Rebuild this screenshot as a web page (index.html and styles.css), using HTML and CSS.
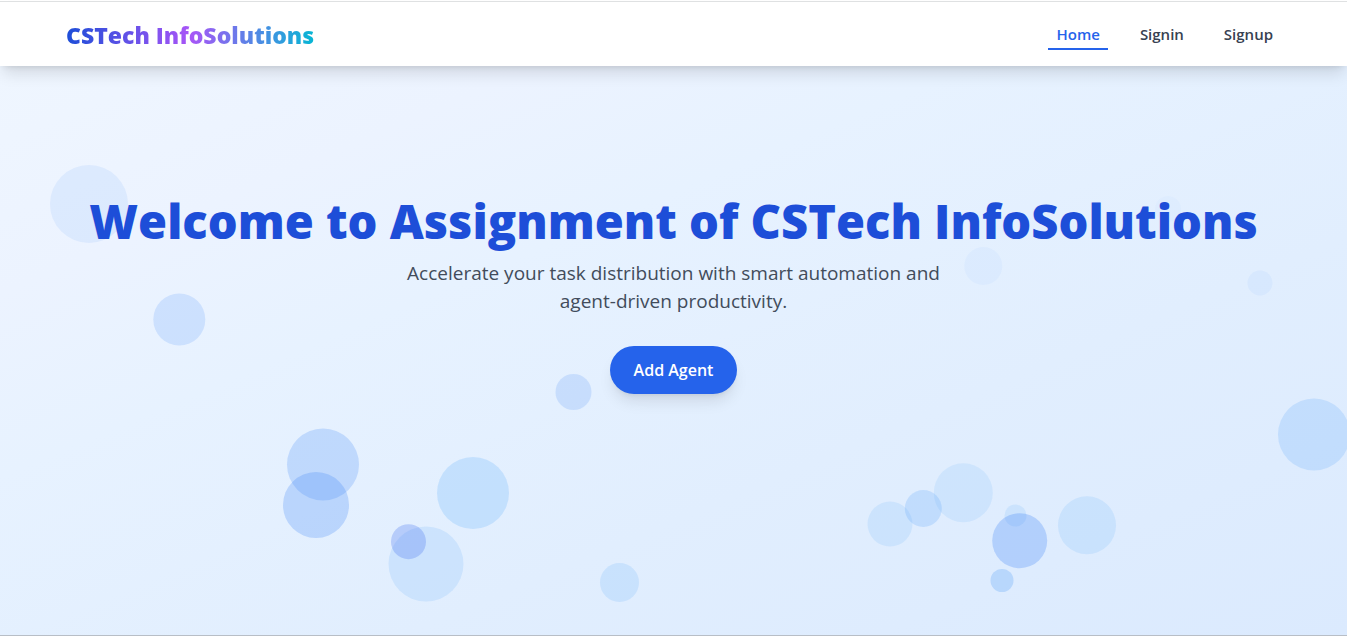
FILE: index.html
```html
<!DOCTYPE html>
<html lang="en">
<head>
<meta charset="utf-8">
<meta name="viewport" content="width=device-width, initial-scale=1">
<title>CSTech InfoSolutions</title>
<link rel="stylesheet" href="styles.css">
</head>
<body>
<header class="navbar">
  <a class="brand" href="#">CSTech InfoSolutions</a>
  <nav class="nav-links">
    <a class="nav-link active" href="#">Home</a>
    <a class="nav-link" href="#">Signin</a>
    <a class="nav-link" href="#">Signup</a>
  </nav>
</header>
<main class="hero">
  <svg class="bubbles" aria-hidden="true">
    <g fill="#60a5fa">
      <circle cx="89" cy="138" r="39" fill="#3b82f6" opacity=".09"/>
      <circle cx="179.300" cy="253.500" r="26" fill="#3b82f6" opacity=".16"/>
      <circle cx="573.500" cy="326" r="18" fill="#3b82f6" opacity=".17"/>
      <circle cx="323" cy="398.500" r="36" fill="#3b82f6" opacity=".22"/>
      <circle cx="316" cy="439" r="33" fill="#3b82f6" opacity=".25"/>
      <circle cx="473" cy="427" r="36" opacity=".24" fill="#60aefa"/>
      <circle cx="426" cy="498" r="37.500" opacity=".17" fill="#60aefa"/>
      <circle cx="408.500" cy="475.700" r="17.500" fill="#4f7cf3" opacity=".3"/>
      <circle cx="619.500" cy="516.500" r="19.500" opacity=".18" fill="#60aefa"/>
      <circle cx="890" cy="458" r="22.500" opacity=".15" fill="#60aefa"/>
      <circle cx="963.300" cy="426.700" r="29.500" opacity=".14" fill="#60aefa"/>
      <circle cx="923.300" cy="442.500" r="18.500" opacity=".24" fill="#60a8fa"/>
      <circle cx="1015.500" cy="449.500" r="11" opacity=".15" fill="#60aefa"/>
      <circle cx="1019.700" cy="474.700" r="27.500" fill="#3b82f6" opacity=".27"/>
      <circle cx="1002" cy="514.500" r="11.500" opacity=".3"/>
      <circle cx="1087" cy="459.300" r="29" opacity=".16" fill="#60aefa"/>
      <circle cx="1314" cy="368.500" r="36" opacity=".22" fill="#60aafa"/>
      <circle cx="983.300" cy="200" r="19" opacity=".06"/>
      <circle cx="1168" cy="143" r="13" opacity=".03"/>
      <circle cx="1260" cy="217" r="12.500" opacity=".08"/>
    </g>
  </svg>
  <div class="hero-content">
    <h1 class="hero-title">Welcome to Assignment of CSTech InfoSolutions</h1>
    <p class="hero-text">Accelerate your task distribution with smart automation and agent-driven productivity.</p>
    <button class="cta" type="button">Add Agent</button>
  </div>
</main>
</body>
</html>
```
FILE: styles.css
```css
* {
  box-sizing: border-box;
}

body {
  display: flex;
  flex-direction: column;
  min-height: 100vh;
  margin: 0;
  padding-top: 1px;
  border-bottom: 1px solid #b8bec6;
  background: #fff;
  font-family: "Segoe UI", "Open Sans", "Noto Sans", sans-serif;
  color: #374151;
}

.navbar {
  position: relative;
  z-index: 1;
  display: flex;
  align-items: center;
  justify-content: space-between;
  height: 65px;
  padding: 0 66px;
  border-top: 1px solid #dfe1e2;
  background: #fff;
  box-shadow: 0 10px 15px -3px rgb(0 0 0 / 12%), 0 4px 6px -4px rgb(0 0 0 / 12%);
}

.brand {
  padding-top: 2px;
  background: linear-gradient(to right, #1d4ed8, #a855f7 50%, #06b6d4);
  background-clip: text;
  -webkit-background-clip: text;
  color: transparent;
  font-size: 23px;
  font-weight: 800;
  line-height: 32px;
  text-decoration: none;
}

.nav-links {
  display: flex;
  gap: 24px;
}

.nav-link {
  padding: 4px 8px 2px;
  border-bottom: 2px solid transparent;
  color: #374151;
  font-size: 15px;
  font-weight: 600;
  line-height: 24px;
  text-decoration: none;
}

.nav-link.active {
  border-color: #2563eb;
  color: #2563eb;
}

.hero {
  position: relative;
  flex: 1;
  padding: 131px 24px 64px;
  overflow: hidden;
  background: linear-gradient(to bottom right, #eff6ff, #ecf3ff 20%, #e7f2ff 36%, #e1eefe 65%, #dbeafe);
}

.bubbles {
  position: absolute;
  inset: 0;
  width: 100%;
  height: 100%;
}

.hero-content {
  position: relative;
  display: flex;
  flex-direction: column;
  align-items: center;
  text-align: center;
}

.hero-title {
  margin: 0 0 14px;
  color: #1d4ed8;
  font-size: 47px;
  font-weight: 800;
  line-height: 48px;
}

.hero-text {
  max-width: 576px;
  margin: 0 0 31px;
  color: #424c5b;
  font-size: 19px;
  line-height: 28px;
}

.cta {
  padding: 12px 24px;
  border: 0;
  border-radius: 24px;
  background: #2563eb;
  box-shadow: 0 10px 15px -3px rgb(0 0 0 / 10%), 0 4px 6px -4px rgb(0 0 0 / 10%);
  color: #fff;
  font-family: inherit;
  font-size: 16px;
  font-weight: 600;
  line-height: 24px;
}
```
